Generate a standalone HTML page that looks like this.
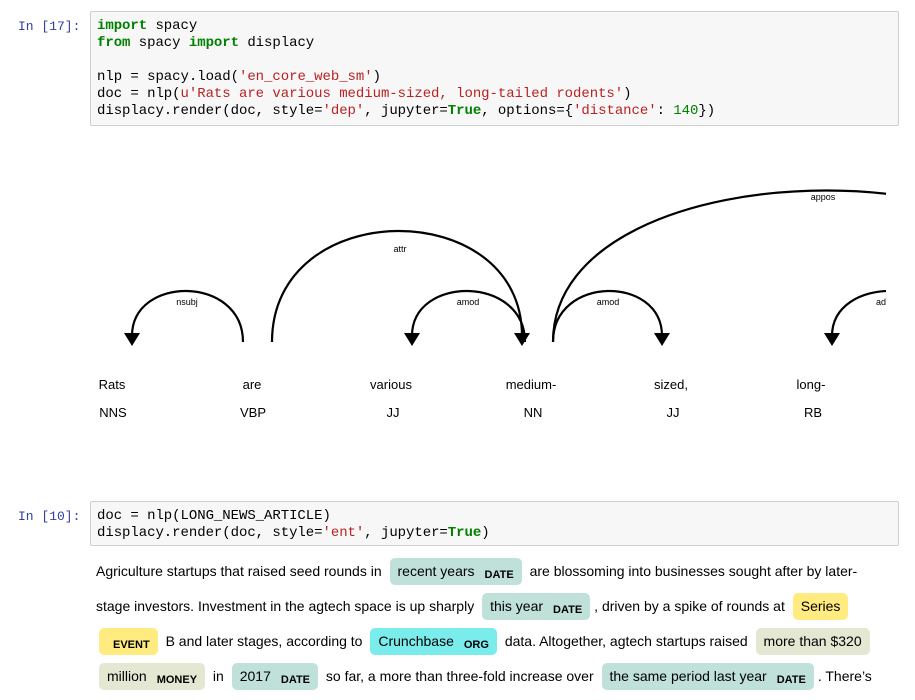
<!DOCTYPE html>
<html><head><meta charset="utf-8"><style>
body{margin:0;width:915px;height:700px;background:#fff;position:relative;overflow:hidden;font-family:"Liberation Sans",sans-serif;}
.prompt{position:absolute;left:18px;font-family:"Liberation Mono",monospace;font-size:13px;color:#303f9f;}
.cell{position:absolute;left:90px;width:809px;background:#f7f7f7;border:1px solid #cfcfcf;border-radius:2px;box-sizing:border-box;}
pre{margin:0;padding:6px 0 0 6px;font-family:"Liberation Mono",monospace;font-size:14px;line-height:17px;color:#000;letter-spacing:-0.05px}
.k{color:#008000;font-weight:bold}.s{color:#ba2121}.n{color:#008000}
.ln{position:absolute;left:96px;white-space:nowrap;font-size:14px;color:#000;line-height:27px;height:27px}
mark{display:inline-block;vertical-align:top;padding:0 8px 0 8px;margin:0 4px;border-radius:5px;line-height:27px;height:27px;color:#000}
mark b{font-size:11px;font-weight:bold;margin-left:10px;vertical-align:-2px}
.d{background:#bfe1d9}.e{background:#ffeb80}.o{background:#7aecec}.m{background:#e4e7d2}
</style></head><body>
<div class="prompt" style="top:19px">In [17]:</div>
<div class="cell" style="top:11px;height:115px"><pre><span class="k">import</span> spacy
<span class="k">from</span> spacy <span class="k">import</span> displacy

nlp = spacy.load(<span class="s">'en_core_web_sm'</span>)
doc = nlp(<span class="s">u'Rats are various medium-sized, long-tailed rodents'</span>)
displacy.render(doc, style=<span class="s">'dep'</span>, jupyter=<span class="k">True</span>, options={<span class="s">'distance'</span>: <span class="n">140</span>})</pre></div>

<svg style="position:absolute;left:0;top:0" width="915" height="700">
<defs><clipPath id="c"><rect x="0" y="130" width="886" height="330"/></clipPath></defs>
<g clip-path="url(#c)" fill="none" stroke="#000" stroke-width="2.2">
<path d="M243,342 C243,275 132,275 132,336"/>
<path d="M272,342 C272,195 522,195 522,336"/>
<path d="M525,342 C525,275 412,275 412,336"/>
<path d="M553,342 C553,275 662,275 662,336"/>
<path d="M553,342 C553,140 1100,140 1100,342"/>
<path d="M951,342 C951,275 832,275 832,336"/>
</g>
<g fill="#000" clip-path="url(#c)">
<path d="M124,333 L140,333 L132,346Z"/>
<path d="M404,333 L420,333 L412,346Z"/>
<path d="M514,333 L530,333 L522,346Z"/>
<path d="M654,333 L670,333 L662,346Z"/>
<path d="M824,333 L840,333 L832,346Z"/>
</g>
<g font-family="Liberation Sans,sans-serif" font-size="9" text-anchor="middle" fill="#000" clip-path="url(#c)">
<text x="187" y="305">nsubj</text>
<text x="400" y="252">attr</text>
<text x="468" y="305">amod</text>
<text x="608" y="305">amod</text>
<text x="823" y="200">appos</text>
<text x="892" y="305">advmod</text>
</g>
<g font-family="Liberation Sans,sans-serif" font-size="13" text-anchor="middle" fill="#000">
<text x="112" y="389">Rats</text><text x="252" y="389">are</text><text x="391" y="389">various</text>
<text x="531" y="389">medium-</text><text x="671" y="389">sized,</text><text x="811" y="389">long-</text>
<text x="113" y="417">NNS</text><text x="253" y="417">VBP</text><text x="393" y="417">JJ</text>
<text x="533" y="417">NN</text><text x="673" y="417">JJ</text><text x="813" y="417">RB</text>
</g>
</svg>

<div class="prompt" style="top:509px">In [10]:</div>
<div class="cell" style="top:501px;height:45px"><pre>doc = nlp(LONG_NEWS_ARTICLE)
displacy.render(doc, style=<span class="s">'ent'</span>, jupyter=<span class="k">True</span>)</pre></div>

<div class="ln" style="top:558px">Agriculture startups that raised seed rounds in <mark class="d">recent years<b>DATE</b></mark> are blossoming into businesses sought after by later-</div>
<div class="ln" style="top:593px">stage investors. Investment in the agtech space is up sharply <mark class="d">this year<b>DATE</b></mark>, driven by a spike of rounds at <mark class="e">Series</mark></div>
<div class="ln" style="top:628px"><mark class="e" style="margin-left:3px"><b style="margin-left:6px">EVENT</b></mark> B and later stages, according to <mark class="o">Crunchbase<b>ORG</b></mark> data. Altogether, agtech startups raised <mark class="m">more than $320</mark></div>
<div class="ln" style="top:663px"><mark class="m" style="margin-left:3px">million<b>MONEY</b></mark> in <mark class="d">2017<b>DATE</b></mark> so far, a more than three-fold increase over <mark class="d">the same period last year<b>DATE</b></mark>. There’s</div>
</body></html>
